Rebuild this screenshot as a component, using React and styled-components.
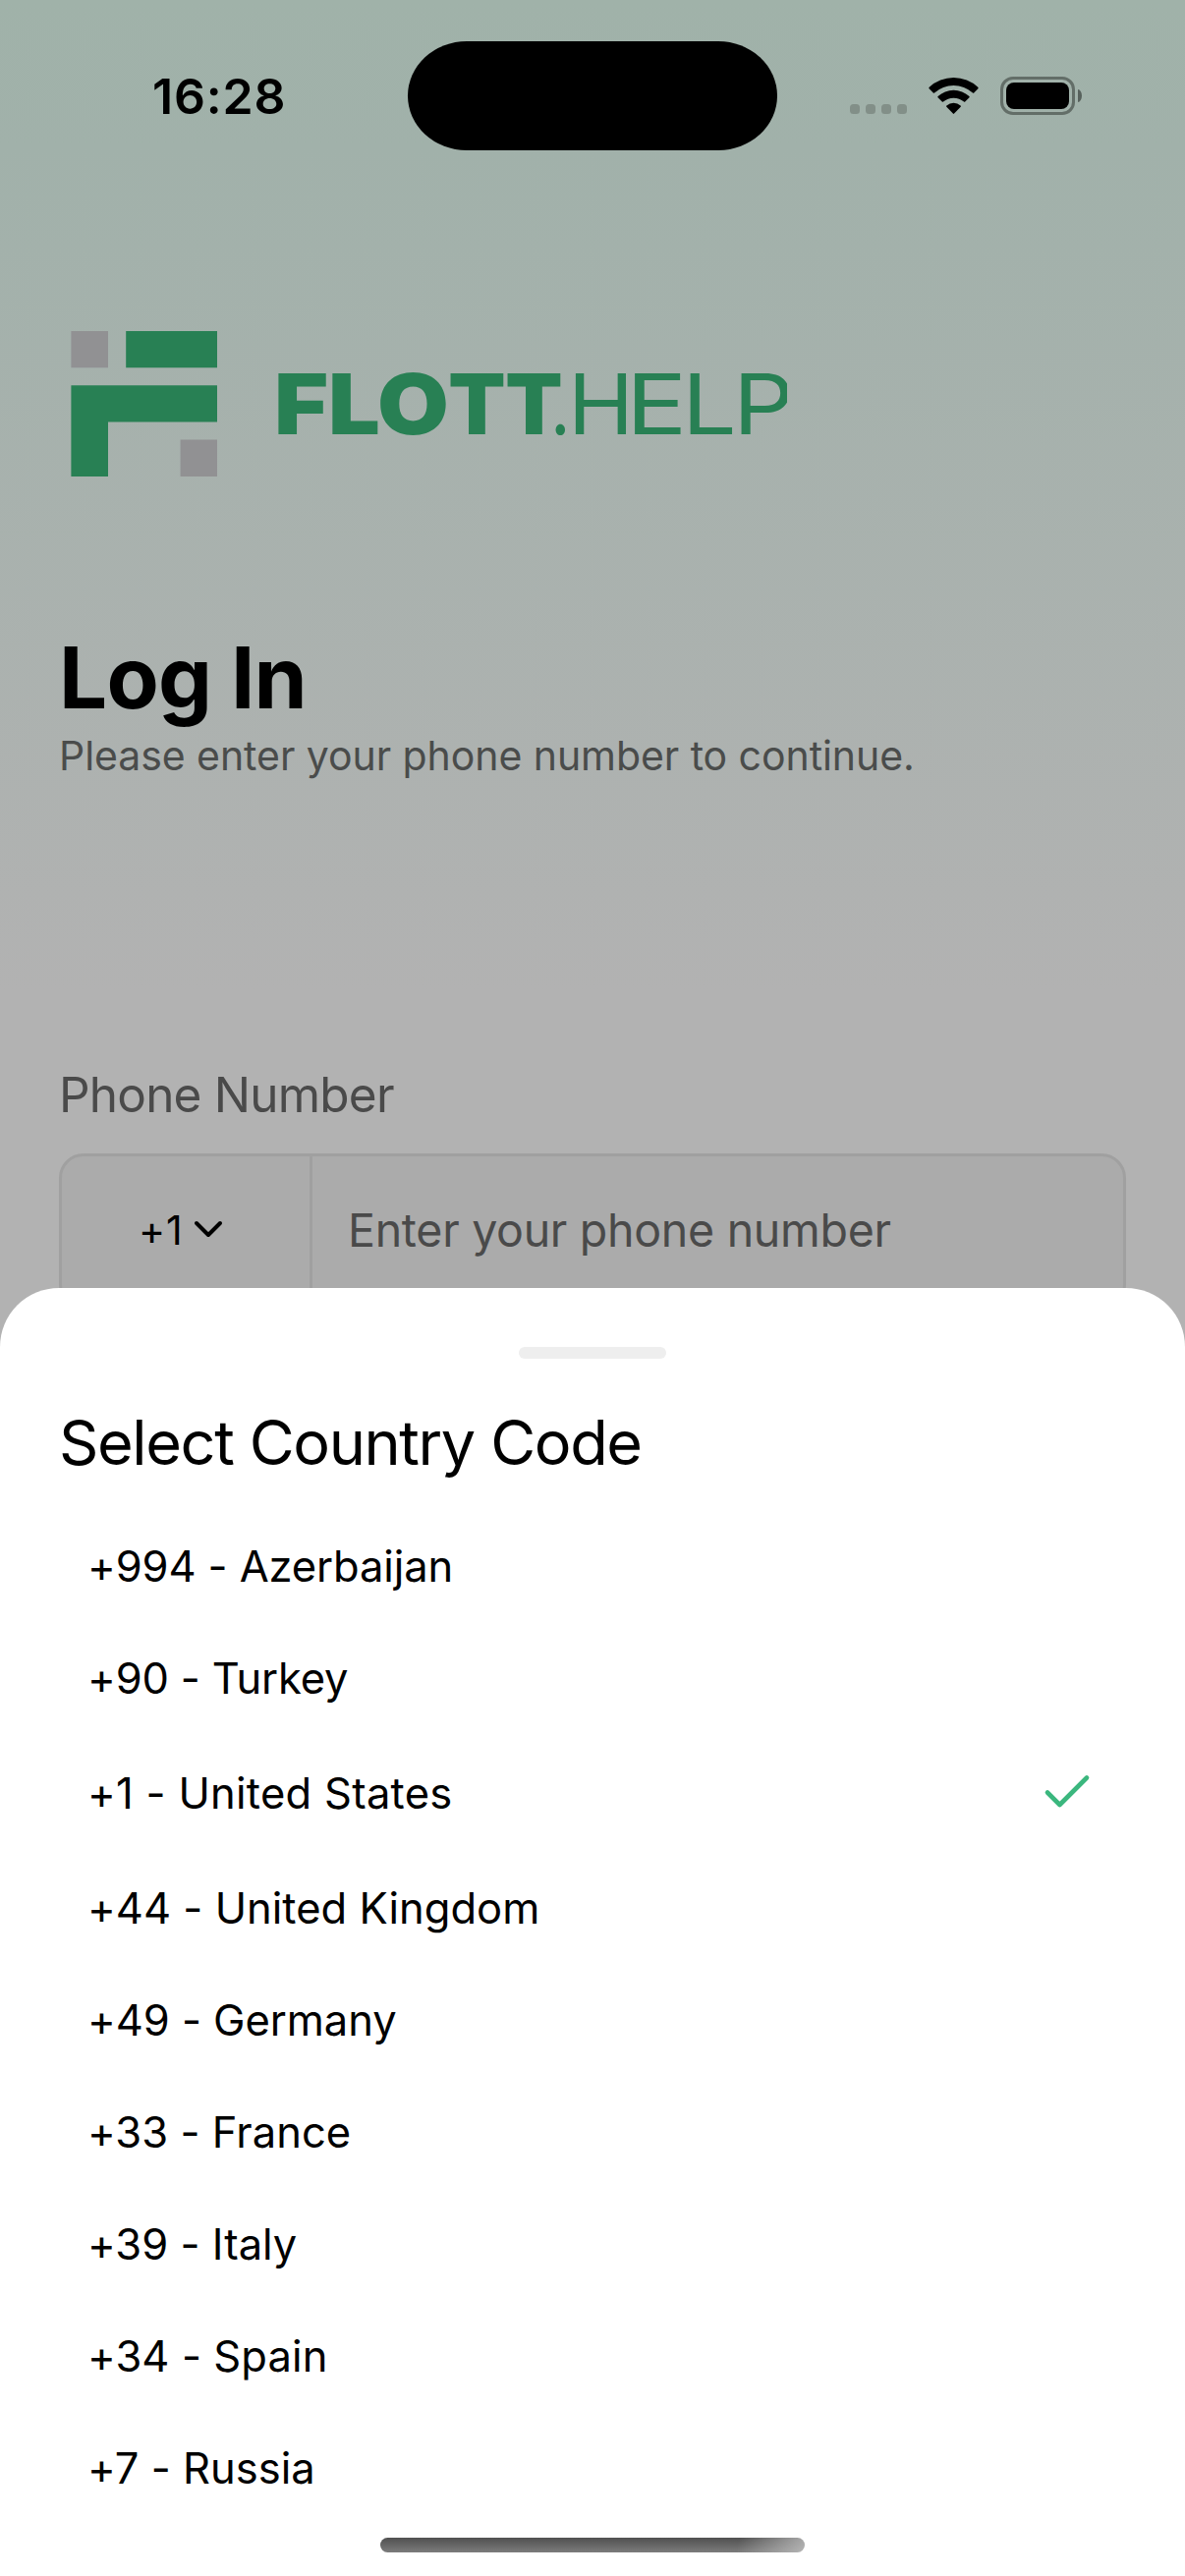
import React from "react";
import styled, { createGlobalStyle } from "styled-components";

const GlobalStyle = createGlobalStyle`
  body {
    margin: 0;
    background: #b2b2b2;
    font-family: Inter, "Liberation Sans", sans-serif;
    color: #000;
  }
  *, *::before, *::after { box-sizing: border-box; }
`;

const Screen = styled.main`
  position: relative;
  width: 1206px;
  height: 2622px;
  overflow: hidden;
  background: linear-gradient(180deg, #a0b2a9 0px, #a1b1aa 150px, #b2b2b2 1010px);
`;

const StatusBar = styled.header`
  display: grid;
  grid-template-columns: 415px 376px 1fr;
  align-items: center;
  height: 194px;
`;

const Clock = styled.time`
  padding: 2px 0 0 155px;
  font-size: 50px;
  font-weight: 600;
  line-height: 60px;
  letter-spacing: 0.82px;
`;

const Island = styled.div`
  height: 111px;
  border-radius: 60px / 55.5px;
  background: #000;
`;

const StatusIcons = styled.div`
  display: flex;
  align-items: flex-end;
  height: 39px;
  padding-left: 74px;
`;

const Dots = styled.div`
  display: flex;
  gap: 6px;
  margin: 0 22px 1px 0;
`;

const Dot = styled.i`
  width: 10px;
  height: 10px;
  border-radius: 3.5px;
  background: #828f88;
`;

const WifiIcon = styled.svg`
  display: block;
  width: 51px;
  height: 38px;
  margin-right: 21.5px;
`;

const Battery = styled.div`
  width: 76px;
  height: 39px;
  padding: 3px;
  border: 3px solid #636e68;
  border-radius: 13px;
`;

const BatteryLevel = styled.div`
  height: 100%;
  border-radius: 8px;
  background: #000;
`;

const BatteryCap = styled.div`
  width: 4px;
  height: 13px;
  margin: 0 0 13px 3px;
  border-radius: 0 4px 4px 0 / 0 6.5px 6.5px 0;
  background: #57615c;
`;

const LoginForm = styled.section`
  display: flex;
  flex-direction: column;
  padding: 143px 60px 0;
`;

const Brand = styled.div`
  display: flex;
  align-items: center;
  height: 148px;
  padding-left: 12px;
`;

const BrandMark = styled.svg`
  display: block;
  width: 149px;
  height: 148px;
  margin-right: 57.6px;
`;

const Wordmark = styled.div`
  width: 522.4px;
  padding-top: 2px;
  overflow: hidden;
  white-space: nowrap;
  font-size: 85px;
  line-height: 110px;
  color: #288054;
`;

const Letter = styled.span`
  display: inline-block;
  width: ${(p) => p.$advance}px;
  font-weight: ${(p) => (p.$heavy ? 860 : 370)};
  transform: scaleX(${(p) => p.$stretch});
  transform-origin: 0 50%;
`;

const Heading = styled.h1`
  margin: 155px 0 0;
  font-size: 87px;
  font-weight: 700;
  line-height: 100px;
  letter-spacing: -0.8px;
`;

const Lead = styled.p`
  margin: 0;
  font-size: 41px;
  line-height: 59px;
  letter-spacing: -0.06px;
  color: #4a4c4b;
`;

const FieldLabel = styled.label`
  margin-top: 284px;
  font-size: 49.5px;
  line-height: 62px;
  letter-spacing: -0.8px;
  color: #4a4a4a;
`;

const PhoneField = styled.div`
  display: flex;
  height: 159px;
  margin-top: 29px;
  border: 3px solid #a0a0a0;
  border-radius: 25px;
  background: #ababab;
`;

const DialCode = styled.div`
  display: flex;
  align-items: center;
  width: 255px;
  padding: 0 0 4px 78px;
  border-right: 3px solid #a0a0a0;
  font-size: 41px;
  line-height: 50px;
  letter-spacing: 0.87px;
`;

const ChevronIcon = styled.svg`
  display: block;
  width: 34px;
  height: 24px;
  margin-left: 8px;
`;

const Placeholder = styled.div`
  display: flex;
  align-items: center;
  padding: 0 0 3px 36px;
  font-size: 46.5px;
  letter-spacing: -0.29px;
  color: #4a4a4a;
`;

const Sheet = styled.section`
  position: absolute;
  left: 0;
  right: 0;
  bottom: 0;
  display: flex;
  flex-direction: column;
  height: 1311px;
  padding: 60px;
  border-radius: 60px 60px 0 0;
  background: #fff;
`;

const Handle = styled.div`
  align-self: center;
  flex: none;
  width: 150px;
  height: 12px;
  border-radius: 6px;
  background: #eee;
`;

const SheetTitle = styled.h2`
  margin: 45px 0 29px;
  font-size: 63px;
  font-weight: 400;
  line-height: 80px;
  letter-spacing: -1.4px;
`;

const CountryList = styled.ul`
  display: flex;
  flex-direction: column;
  margin: 0;
  padding: 0;
  list-style: none;
`;

const CountryRow = styled.li`
  display: flex;
  flex: none;
  align-items: center;
  justify-content: space-between;
  height: ${(p) => (p.$selected ? 120 : 114)}px;
  padding: 0 30px 0 29px;
  font-size: 43.5px;
  letter-spacing: ${(p) => p.$tracking}px;
`;

const CheckIcon = styled.svg`
  display: block;
  width: 60px;
  height: 60px;
`;

const HomeIndicator = styled.div`
  position: absolute;
  left: 387px;
  bottom: 24px;
  width: 432px;
  height: 15px;
  border-radius: 7.5px;
  background:
    linear-gradient(100deg, transparent 84%, rgba(200, 200, 200, 0.75) 100%),
    linear-gradient(180deg, #505050, #7c7c7c);
`;

const letters = [
  { char: "F", heavy: true, stretch: 1.11, advance: 55.1 },
  { char: "L", heavy: true, stretch: 1.1, advance: 50.6 },
  { char: "O", heavy: true, stretch: 1.105, advance: 71.9 },
  { char: "T", heavy: true, stretch: 1, advance: 58 },
  { char: "T", heavy: true, stretch: 1, advance: 46 },
  { char: ".", stretch: 0.84, advance: 17.5 },
  { char: "H", stretch: 1.06, advance: 59.7 },
  { char: "E", stretch: 1.22, advance: 56.4 },
  { char: "L", stretch: 1.16, advance: 52.2 },
  { char: "P", stretch: 1.15, advance: 54 },
];

const countries = [
  { code: "+994", name: "Azerbaijan", tracking: -0.1 },
  { code: "+90", name: "Turkey", tracking: -0.15 },
  { code: "+1", name: "United States", tracking: 0.28, selected: true },
  { code: "+44", name: "United Kingdom", tracking: 0.03 },
  { code: "+49", name: "Germany", tracking: -0.05 },
  { code: "+33", name: "France", tracking: 0.05 },
  { code: "+39", name: "Italy", tracking: 0.03 },
  { code: "+34", name: "Spain", tracking: 0.1 },
  { code: "+7", name: "Russia", tracking: 0.02 },
];

function Logo() {
  return (
    <Brand>
      <BrandMark viewBox="0 0 149 148">
        <path fill="#919193" d="M.4 0H38v37.3H.4zM111.6 110.5H149V148h-37.4z" />
        <path fill="#288054" d="M56.2 0H149v37.3H56.2zM.4 55.3H149v37.2H38V148H.4z" />
      </BrandMark>
      <Wordmark>
        {letters.map((l, i) => (
          <Letter key={i} $heavy={l.heavy} $stretch={l.stretch} $advance={l.advance}>
            {l.char}
          </Letter>
        ))}
      </Wordmark>
    </Brand>
  );
}

export default function App() {
  return (
    <Screen>
      <GlobalStyle />
      <StatusBar>
        <Clock>16:28</Clock>
        <Island />
        <StatusIcons>
          <Dots>
            <Dot />
            <Dot />
            <Dot />
            <Dot />
          </Dots>
          <WifiIcon viewBox="0 0 51 38">
            <path d="M.6 11.2Q0 10.5.7 9.8A36.5 36.5 0 0 1 50.3 9.8Q51 10.5 50.4 11.2L46.2 15.5Q45.6 16 45 15.5A29 29 0 0 0 6 15.5Q5.4 16 4.8 15.5Z" />
            <path d="M9.5 20.2Q9 19.6 9.6 19A23.5 23.5 0 0 1 41.4 19Q42 19.6 41.5 20.2L37.2 24.5Q36.6 25 36 24.5A16.4 16.4 0 0 0 15 24.5Q14.4 25 13.8 24.5Z" />
            <path d="M18.3 29.8Q17.8 29.2 18.4 28.6A10.5 10.5 0 0 1 32.6 28.6Q33.2 29.2 32.7 29.8L26.1 36.6Q25.5 37.2 24.9 36.6Z" />
          </WifiIcon>
          <Battery>
            <BatteryLevel />
          </Battery>
          <BatteryCap />
        </StatusIcons>
      </StatusBar>

      <LoginForm>
        <Logo />
        <Heading>Log In</Heading>
        <Lead>Please enter your phone number to continue.</Lead>
        <FieldLabel>Phone Number</FieldLabel>
        <PhoneField>
          <DialCode>
            +1
            <ChevronIcon viewBox="0 0 34 24" fill="none" stroke="#000" strokeWidth="4" strokeLinecap="round" strokeLinejoin="round">
              <path d="M5 5l12 12L29 5" />
            </ChevronIcon>
          </DialCode>
          <Placeholder>Enter your phone number</Placeholder>
        </PhoneField>
      </LoginForm>

      <Sheet>
        <Handle />
        <SheetTitle>Select Country Code</SheetTitle>
        <CountryList>
          {countries.map((c) => (
            <CountryRow key={c.code} $selected={c.selected} $tracking={c.tracking}>
              {c.code} - {c.name}
              {c.selected && (
                <CheckIcon viewBox="0 0 60 60" fill="none" stroke="#3bb77e" strokeWidth="4.6" strokeLinecap="round" strokeLinejoin="round">
                  <path d="M10 29.5L22.5 42L50 14.5" />
                </CheckIcon>
              )}
            </CountryRow>
          ))}
        </CountryList>
      </Sheet>
      <HomeIndicator />
    </Screen>
  );
}
